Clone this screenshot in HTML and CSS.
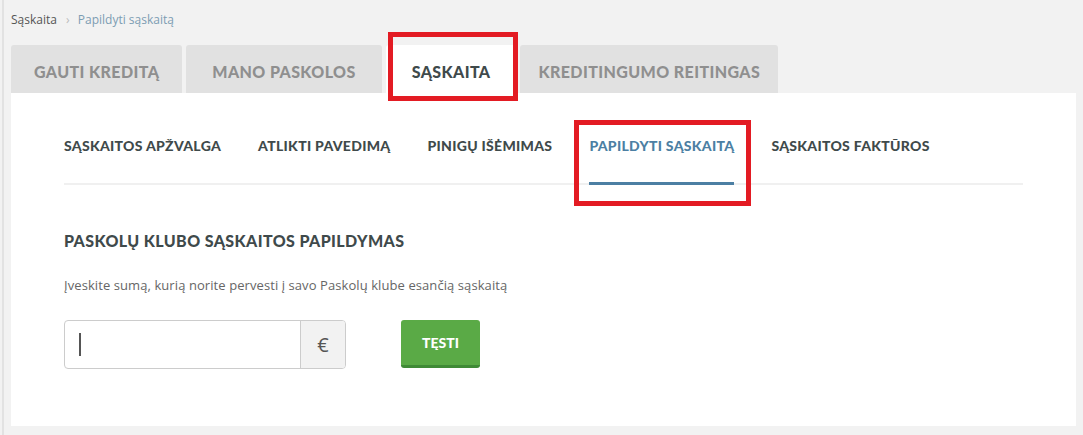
FILE: index.html
```html
<!DOCTYPE html>
<html lang="lt">
<head>
  <meta charset="UTF-8">
  <title>Papildyti sąskaitą</title>
  <link rel="stylesheet" href="styles.css">
</head>
<body>
  <div class="page">
    <div class="breadcrumb">
      <a href="#" class="crumb">Sąskaita</a>
      <span class="sep">&#8250;</span>
      <span class="crumb current">Papildyti sąskaitą</span>
    </div>

    <div class="tabs">
      <a href="#" class="tab">Gauti kreditą</a>
      <a href="#" class="tab">Mano paskolos</a>
      <a href="#" class="tab active">Sąskaita</a>
      <a href="#" class="tab">Kreditingumo reitingas</a>
    </div>

    <div class="card">
      <div class="subnav">
        <a href="#" class="subnav-item">Sąskaitos apžvalga</a>
        <a href="#" class="subnav-item">Atlikti pavedimą</a>
        <a href="#" class="subnav-item">Pinigų išėmimas</a>
        <a href="#" class="subnav-item active">Papildyti sąskaitą</a>
        <a href="#" class="subnav-item">Sąskaitos faktūros</a>
      </div>

      <h3 class="section-title">Paskolų klubo sąskaitos papildymas</h3>
      <p class="hint">Įveskite sumą, kurią norite pervesti į savo Paskolų klube esančią sąskaitą</p>

      <div class="deposit">
        <div class="amount">
          <input type="text" class="amount-input">
          <span class="addon">€</span>
        </div>
        <button class="btn-next">Tęsti</button>
      </div>
    </div>
  </div>
</body>
</html>
```

FILE: styles.css
```css
body {
  margin: 0;
  background: #f2f2f2;
  font-family: "Open Sans", Arial, sans-serif;
  color: #555;
}

a {
  text-decoration: none;
}

.page {
  margin-left: 2px;
  border-left: 2px solid #e2e2e2;
  padding: 0 7px 9px 7px;
  min-height: 426px;
}

.breadcrumb {
  padding-top: 12px;
  height: 33px;
  font-size: 12px;
  line-height: 16px;
}

.crumb {
  color: #555;
}

.sep {
  color: #bbb;
  margin: 0 5px 0 6px;
}

.current {
  color: #7d9db3;
}

.tabs {
  display: flex;
  gap: 4px;
}

.tab {
  display: block;
  height: 48px;
  line-height: 53px;
  padding: 0 23px;
  background: #e1e1e1;
  color: #8f8f8f;
  font-family: Lato, sans-serif;
  font-weight: 900;
  font-size: 16px;
  letter-spacing: 0.4px;
  text-transform: uppercase;
  border-radius: 3px 3px 0 0;
}

.tab:nth-child(2) {
  padding: 0 26px;
}

.tab:last-child {
  padding: 0 18px;
}

.tab.active {
  position: relative;
  padding: 0 26px;
  background: #fff;
  color: #3f4a4b;
}

/* red highlight frame */
.tab.active::after {
  content: "";
  position: absolute;
  top: -13px;
  bottom: -8px;
  left: 2px;
  right: -2px;
  border: 5px solid #e31b23;
}

.card {
  background: #fff;
  padding: 33px 53px 57px 53px;
  height: 243px;
}

.subnav {
  display: flex;
  gap: 37px;
  border-bottom: 2px solid #f0f0f0;
}

.subnav-item {
  display: block;
  line-height: 20px;
  padding: 10px 0 26px 0;
  color: #3f4a4b;
  font-family: Lato, sans-serif;
  font-weight: 900;
  font-size: 14px;
  letter-spacing: 0.3px;
  text-transform: uppercase;
  margin-bottom: -2px;
  border-bottom: 3px solid transparent;
}

.subnav-item.active {
  position: relative;
  color: #4c7fa3;
  border-bottom-color: #4c7fa3;
}

.subnav-item.active::after {
  content: "";
  position: absolute;
  top: -6px;
  bottom: -24px;
  left: -15px;
  right: -17px;
  border: 5px solid #e31b23;
}

.section-title {
  margin: 46px 0 24px 0;
  line-height: 20px;
  color: #3f4a4b;
  font-family: Lato, sans-serif;
  font-weight: 900;
  font-size: 16px;
  letter-spacing: 0.4px;
  text-transform: uppercase;
}

.hint {
  margin: 0 0 25px 0;
  font-size: 13px;
  letter-spacing: 0.08px;
  line-height: 20px;
  color: #666;
}

.deposit {
  display: flex;
  gap: 55px;
}

.amount {
  display: flex;
  width: 282px;
  height: 49px;
  box-sizing: border-box;
  border: 1px solid #ccc;
  border-radius: 4px;
  overflow: hidden;
}

.amount-input {
  flex: 1;
  border: none;
  padding: 0 14px;
  font-size: 16px;
  outline: none;
  background: linear-gradient(#555, #555) 14px 12px / 2px 23px no-repeat;
}

.addon {
  width: 44px;
  border-left: 1px solid #ccc;
  background: #f2f2f2;
  color: #555;
  font-size: 20px;
  display: flex;
  align-items: center;
  justify-content: center;
}

.btn-next {
  width: 79px;
  height: 48px;
  background: #5aaa46;
  color: #fff;
  border: none;
  border-bottom: 3px solid #3f8a36;
  border-radius: 3px;
  font-family: Lato, sans-serif;
  font-weight: 900;
  font-size: 14px;
  text-transform: uppercase;
  cursor: pointer;
}
```
